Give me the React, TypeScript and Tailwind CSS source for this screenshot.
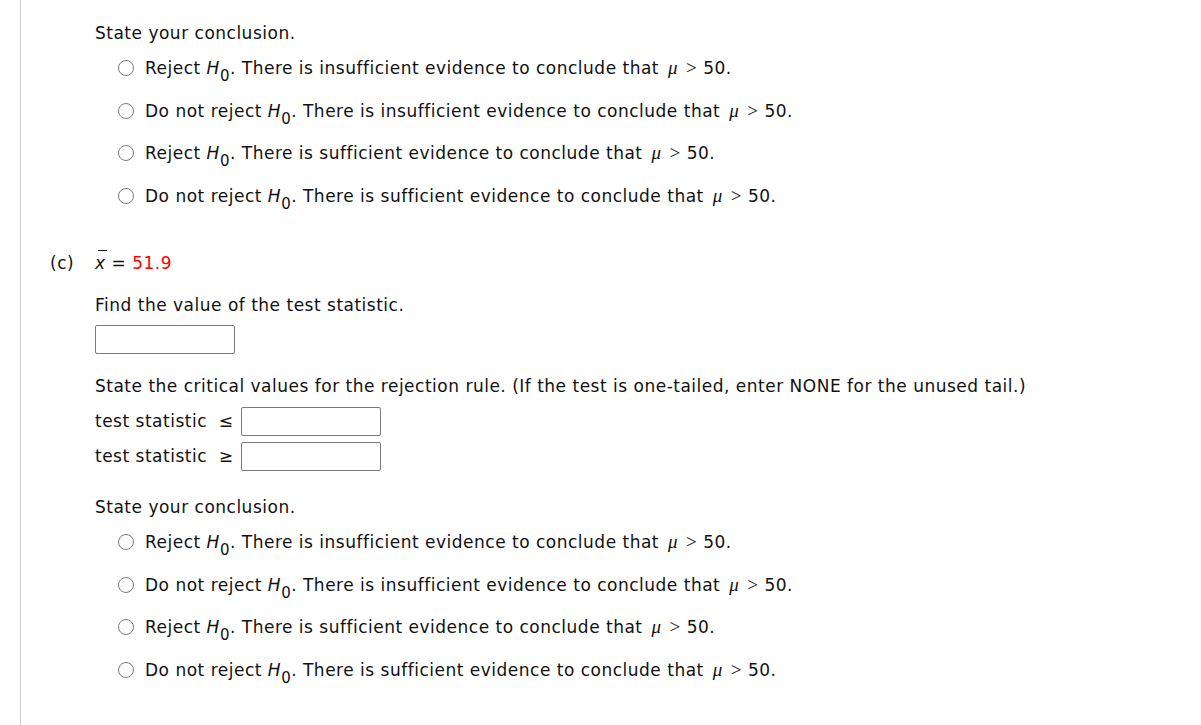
const mu = <span className="ml-[3px] mr-[8px] font-['Liberation_Serif',serif] italic text-[19px]">μ</span>
const gt = <span className="mr-[6px] font-['Liberation_Serif',serif] text-[19px]">&gt;</span>

function H0() {
  return (
    <span>
      <span className="italic">H</span>
      <sub className="relative top-[3px] text-[15px] align-sub">0</sub>
    </span>
  )
}

const options = [
  ['Reject', 'There is insufficient evidence to conclude that'],
  ['Do not reject', 'There is insufficient evidence to conclude that'],
  ['Reject', 'There is sufficient evidence to conclude that'],
  ['Do not reject', 'There is sufficient evidence to conclude that'],
]

function Conclusion() {
  return (
    <div>
      <div className="h-[24px] leading-[24px]">State your conclusion.</div>
      <div className="mt-[2px] pl-[23px]">
        {options.map(([a, b], i) => (
          <label key={i} className="flex h-[42.5px] items-center gap-[11px]">
            <span className="inline-block h-[16px] w-[16px] rounded-full border-[1.5px] border-[#7a7a7a] bg-white" />
            <span className="whitespace-nowrap">
              {a} <H0 />. {b} {mu}{gt}50.
            </span>
          </label>
        ))}
      </div>
    </div>
  )
}

function Box({ className = '' }: { className?: string }) {
  return (
    <input
      type="text"
      className={`h-[29px] w-[140px] rounded-[2px] border border-[#7a7a7a] bg-white ${className}`}
    />
  )
}

export default function App() {
  return (
    <main className="min-h-[725px] bg-white pl-5 font-['DejaVu_Sans',Verdana,sans-serif] text-[17px] tracking-[0.5px] text-[#111]">
      <div className="min-h-[725px] border-l border-[#cccccc] pl-[29px] pt-[21px]">
        <div className="ml-[45px]">
          <Conclusion />
        </div>

        <div className="mt-[34px] flex">
          <div className="w-[45px] leading-[24px]">(c)</div>
          <div className="flex-1">
            <div className="leading-[24px]">
              <span className="relative inline-block italic">
                <span className="absolute left-[3px] top-[-1px] h-px w-[9px] bg-[#111]" />
                x
              </span>{' '}
              = <span className="text-[#ff0000]">51.9</span>
            </div>
            <div className="mt-[18px] leading-[24px]">Find the value of the test statistic.</div>
            <Box className="mt-[8px] block" />

            <div className="mt-[20px] leading-[24px]">
              State the critical values for the rejection rule. (If the test is one-tailed, enter NONE for
              the unused tail.)
            </div>
            <div className="mt-[9px] flex items-center">
              <span className="w-[146px]">test statistic&nbsp; ≤</span>
              <Box />
            </div>
            <div className="mt-[6px] flex items-center">
              <span className="w-[146px]">test statistic&nbsp; ≥</span>
              <Box />
            </div>

            <div className="mt-[24px]">
              <Conclusion />
            </div>
          </div>
        </div>
      </div>
    </main>
  )
}
